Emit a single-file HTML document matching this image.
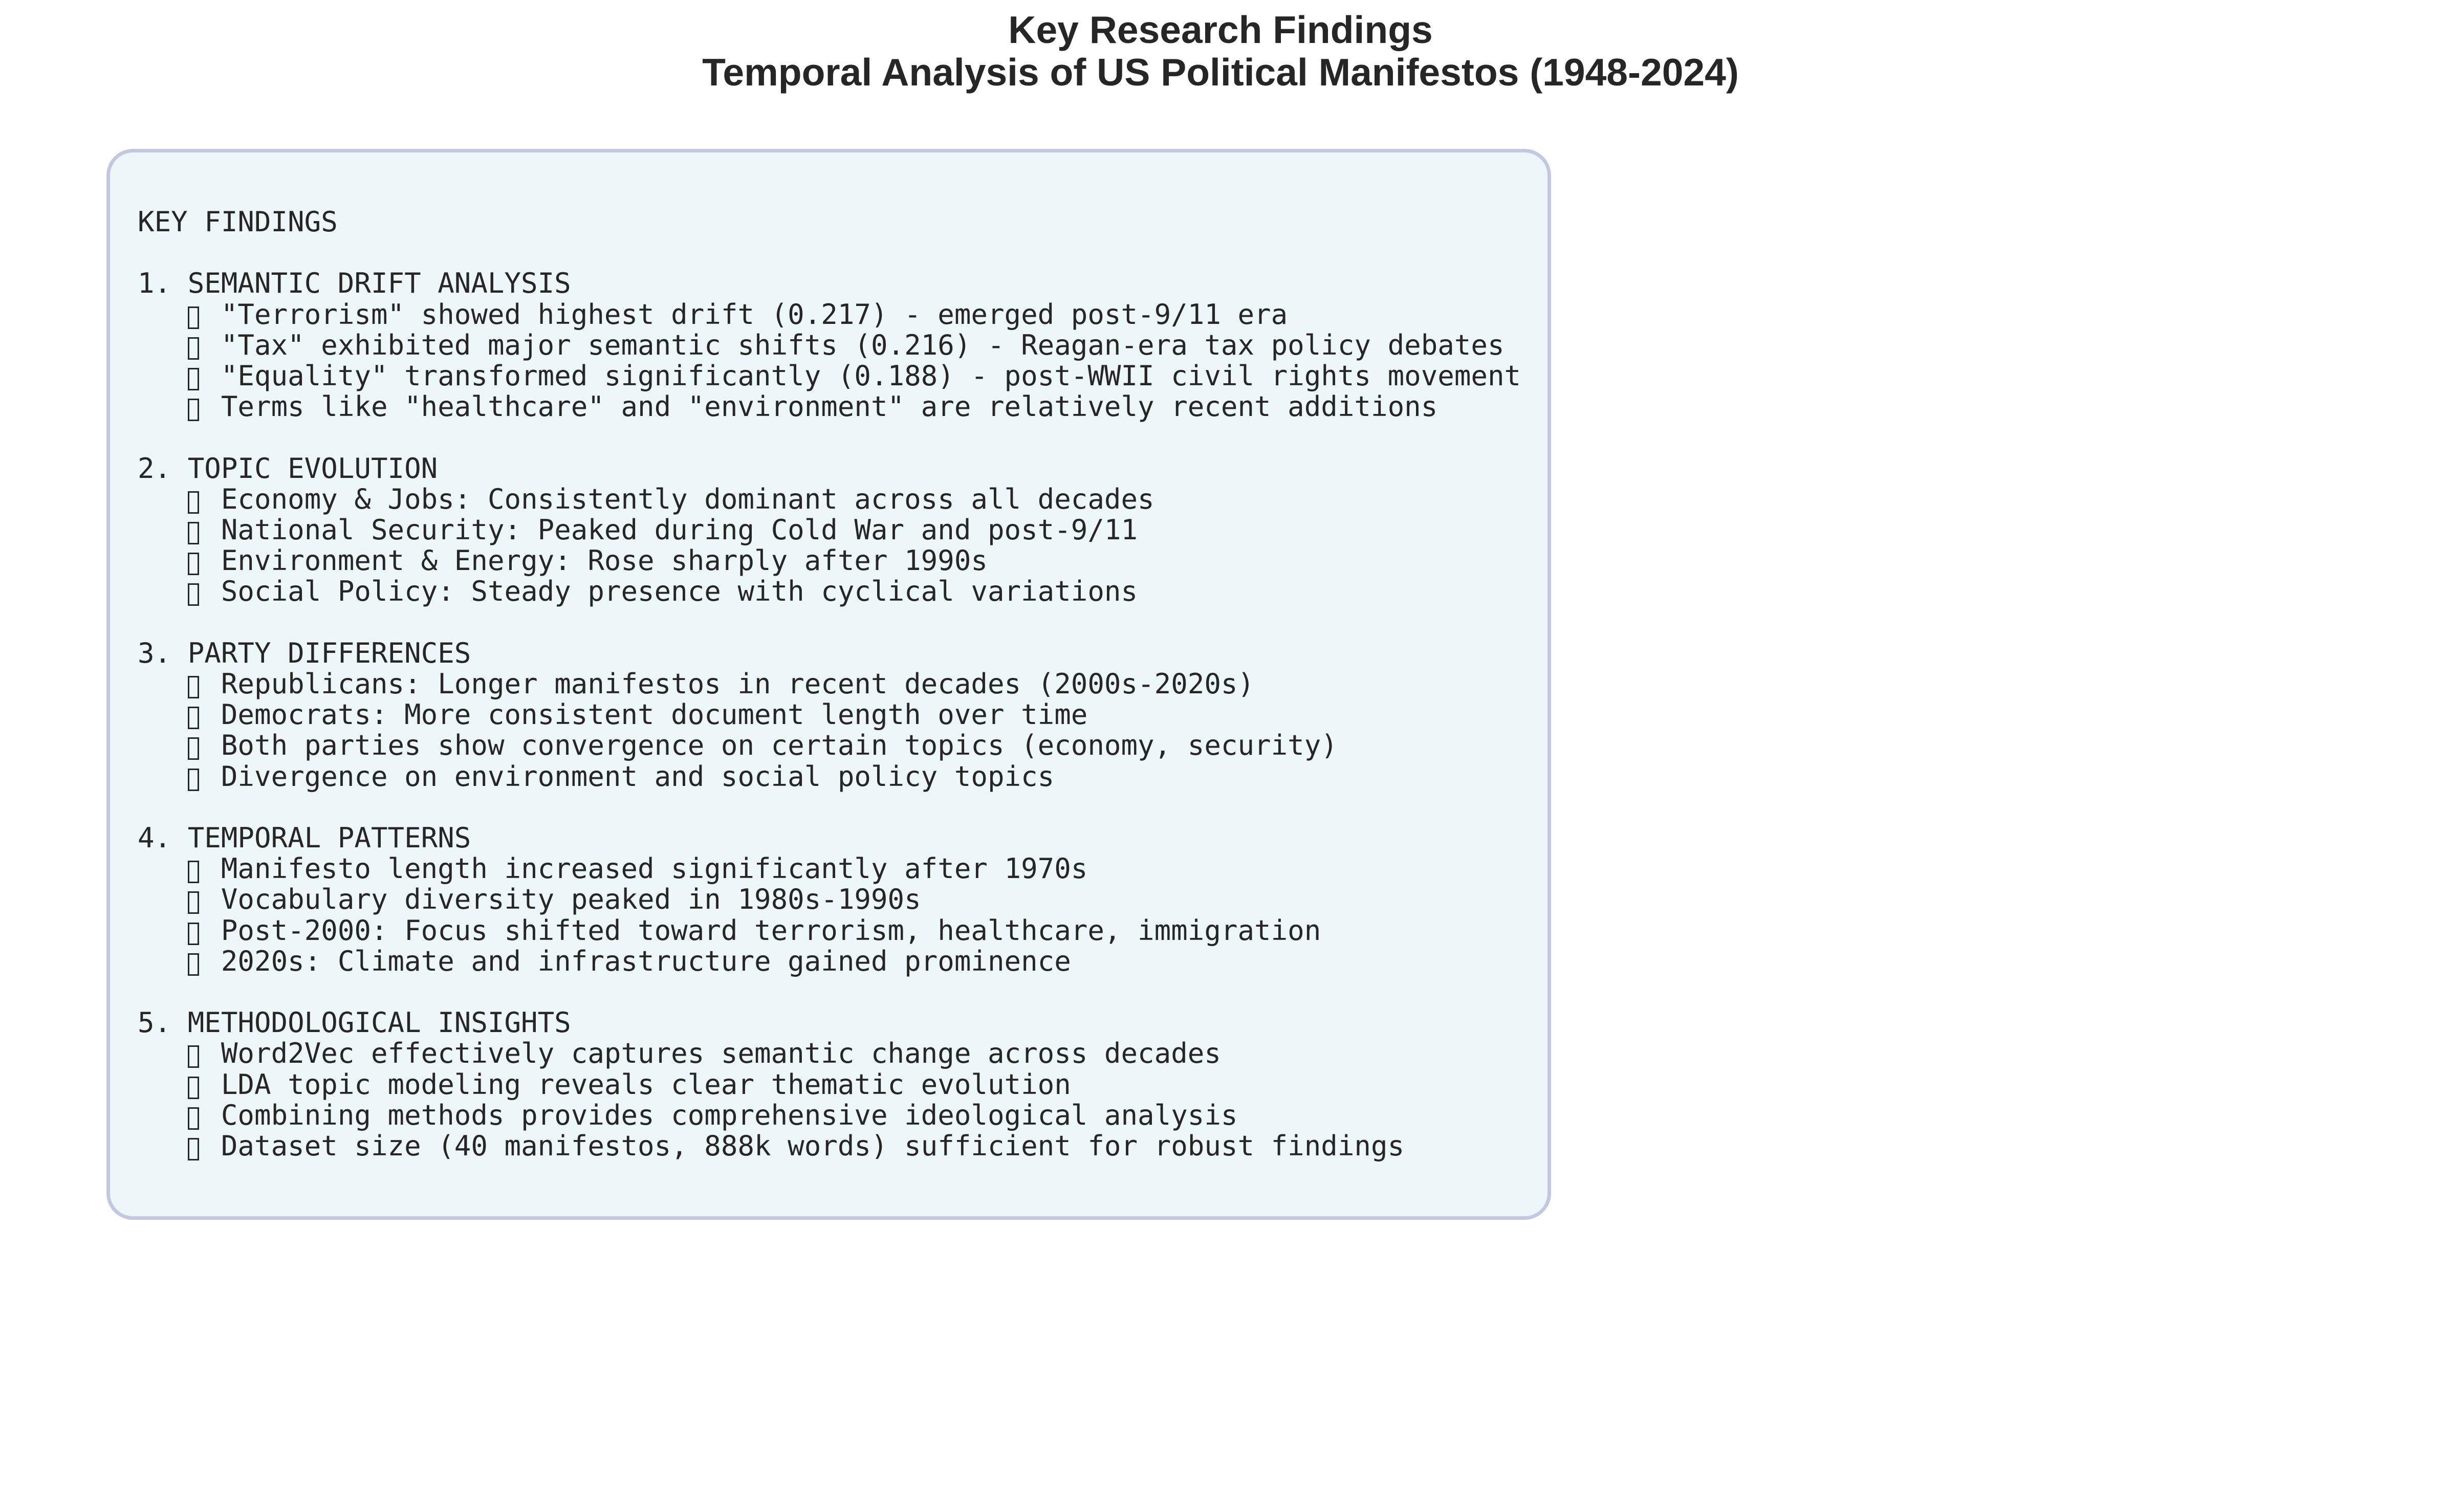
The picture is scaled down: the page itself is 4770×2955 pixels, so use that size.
<!DOCTYPE html>
<html><head><meta charset="utf-8"><style>
html,body{margin:0;padding:0;background:#fff;width:4770px;height:2955px;overflow:hidden;position:relative}
.t{position:absolute;left:0;width:4770px;text-align:center;font-family:"Liberation Sans",sans-serif;font-weight:bold;font-size:75px;color:#262626;line-height:82px}
.box{position:absolute;left:208px;top:291px;width:2809px;height:2079px;border:7px solid #c3c8e2;border-radius:52px;background:#edf6f9}
pre{position:absolute;left:269px;top:404px;margin:0;font-family:"DejaVu Sans Mono","Liberation Mono",monospace;font-size:54.1px;line-height:60.2px;color:#262626}
.b{display:inline-block;width:22px;height:44px;border:3px solid #262626;box-sizing:border-box;vertical-align:-10px;margin-right:10.6px}
</style></head><body>
<div class="t" style="top:17px">Key Research Findings</div>
<div class="t" style="top:100px">Temporal Analysis of US Political Manifestos (1948-2024)</div>
<div class="box"></div>
<pre>KEY FINDINGS

1. SEMANTIC DRIFT ANALYSIS
   <span class="b"></span> "Terrorism" showed highest drift (0.217) - emerged post-9/11 era
   <span class="b"></span> "Tax" exhibited major semantic shifts (0.216) - Reagan-era tax policy debates
   <span class="b"></span> "Equality" transformed significantly (0.188) - post-WWII civil rights movement
   <span class="b"></span> Terms like "healthcare" and "environment" are relatively recent additions

2. TOPIC EVOLUTION
   <span class="b"></span> Economy &amp; Jobs: Consistently dominant across all decades
   <span class="b"></span> National Security: Peaked during Cold War and post-9/11
   <span class="b"></span> Environment &amp; Energy: Rose sharply after 1990s
   <span class="b"></span> Social Policy: Steady presence with cyclical variations

3. PARTY DIFFERENCES
   <span class="b"></span> Republicans: Longer manifestos in recent decades (2000s-2020s)
   <span class="b"></span> Democrats: More consistent document length over time
   <span class="b"></span> Both parties show convergence on certain topics (economy, security)
   <span class="b"></span> Divergence on environment and social policy topics

4. TEMPORAL PATTERNS
   <span class="b"></span> Manifesto length increased significantly after 1970s
   <span class="b"></span> Vocabulary diversity peaked in 1980s-1990s
   <span class="b"></span> Post-2000: Focus shifted toward terrorism, healthcare, immigration
   <span class="b"></span> 2020s: Climate and infrastructure gained prominence

5. METHODOLOGICAL INSIGHTS
   <span class="b"></span> Word2Vec effectively captures semantic change across decades
   <span class="b"></span> LDA topic modeling reveals clear thematic evolution
   <span class="b"></span> Combining methods provides comprehensive ideological analysis
   <span class="b"></span> Dataset size (40 manifestos, 888k words) sufficient for robust findings</pre>
</body></html>
